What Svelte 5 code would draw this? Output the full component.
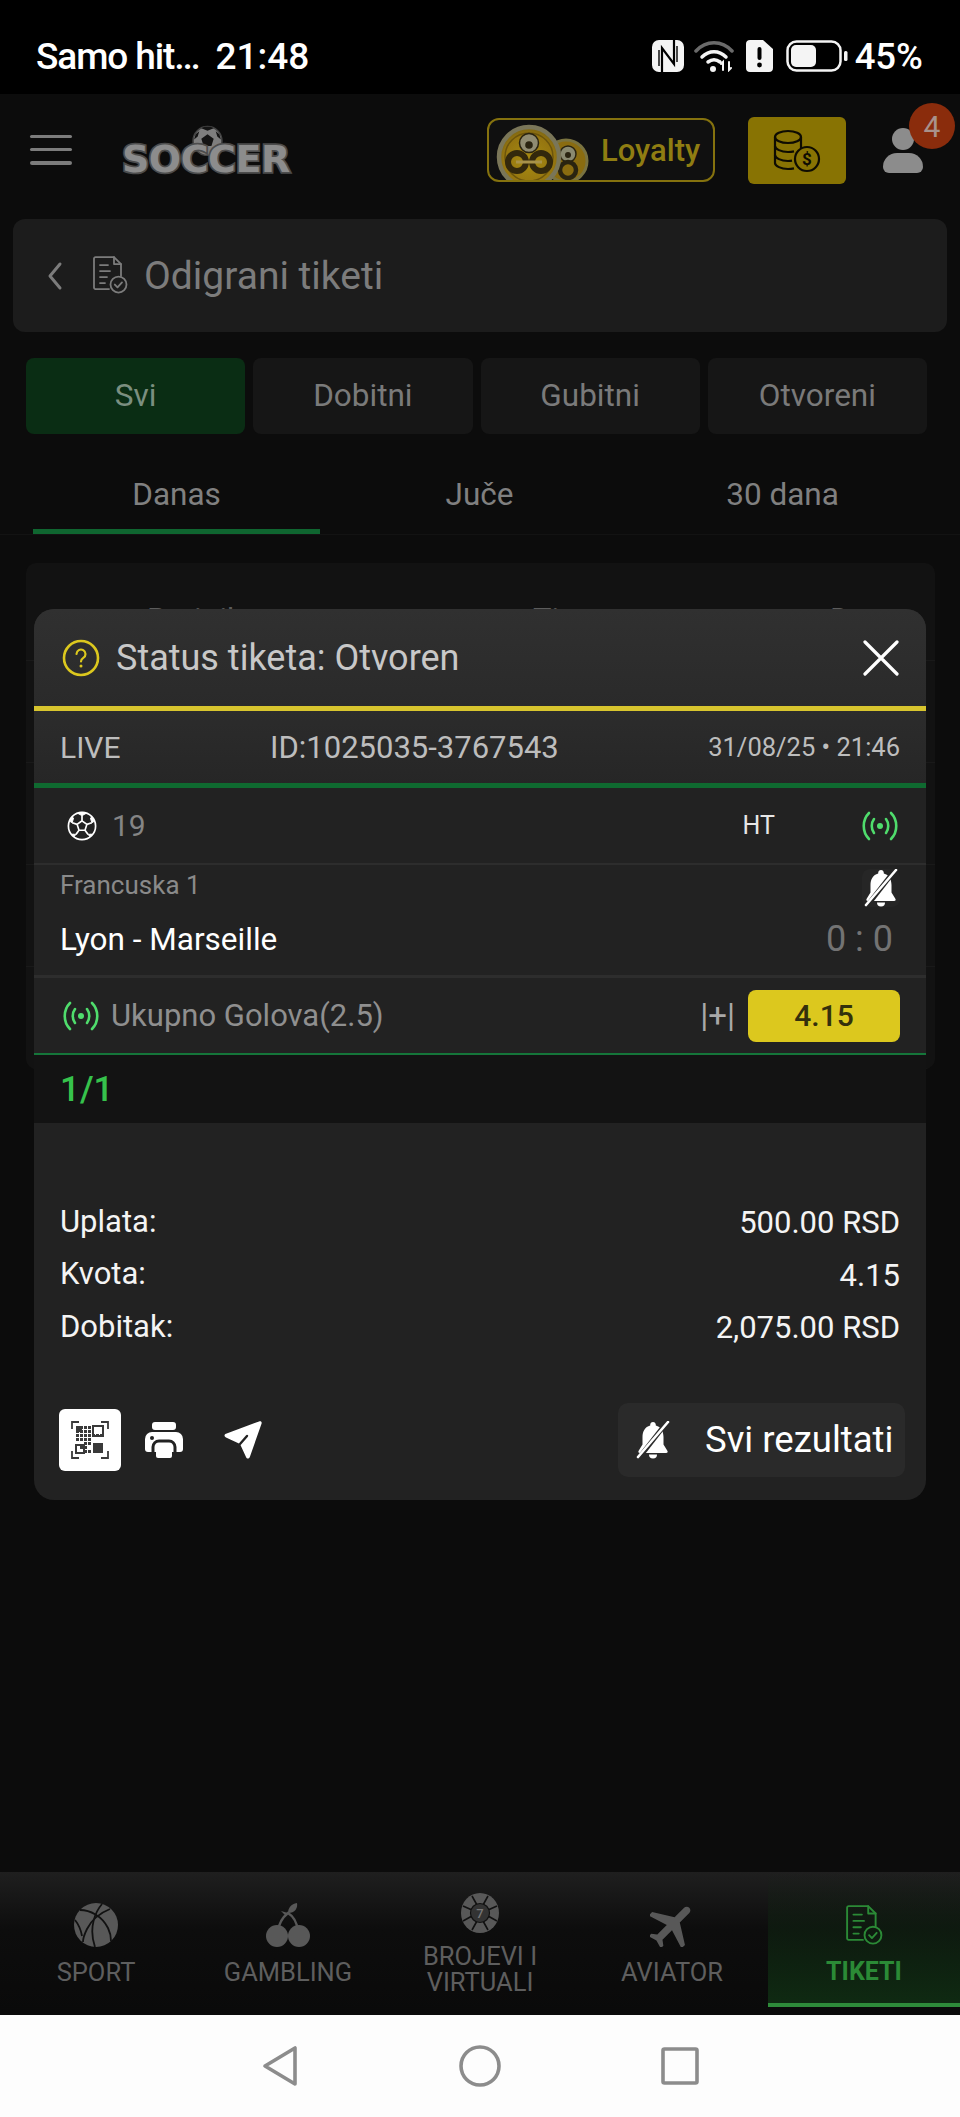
<script>
	const filters = ['Svi', 'Dobitni', 'Gubitni', 'Otvoreni'];
	const periods = ['Danas', 'Juče', '30 dana'];
	const totals = [
		['Uplata:', '500.00 RSD'],
		['Kvota:', '4.15'],
		['Dobitak:', '2,075.00 RSD']
	];
	const qrCells = [
		[3, 7], [7, 3], [7, 7], [11, 3], [11, 7], [15, 11], [11, 11], [7, 11], [3, 15], [7, 15], [11, 15], [11, 19],
		[15, 15], [7, 23], [11, 23], [19, 11], [23, 11], [27, 11], [15, 7], [15, 3], [15, 19], [15, 27], [11, 27], [3, 11]
	];
</script>

{#snippet live()}
	<svg class="live" viewBox="0 0 38 30" fill="none" stroke="#4fdc6c" stroke-width="2.6" stroke-linecap="round">
		<path d="M8 2C1 9 1 21 8 28" />
		<path d="M13 8c-3 4-3 10 0 14" />
		<path d="M30 2c7 7 7 19 0 26" />
		<path d="M25 8c3 4 3 10 0 14" />
		<circle cx="19" cy="15" r="3" fill="#4fdc6c" stroke="none" />
	</svg>
{/snippet}

{#snippet bell(slashBg)}
	<svg class="bell" viewBox="0 0 36 38">
		<path
			fill="#fff"
			d="M18 1c-1.6 0-2.800 1.200-2.800 2.800v.8C10 6 7.500 10.500 7.500 16v7.500L3.500 30c-.5 1 .2 2 1.300 2h26.400c1.100 0 1.800-1 1.300-2l-4-6.500V16c0-5.500-2.500-10-7.700-11.400v-.8C20.800 2.200 19.600 1 18 1z"
		/>
		<path fill="#fff" d="M14 33.500h8a4 4 0 0 1-8 0z" />
		<path d="M32 1 4 37" stroke={slashBg} stroke-width="4.800" />
		<path d="M33 1 3 36" stroke="#fff" stroke-width="2.600" stroke-linecap="round" />
	</svg>
{/snippet}

{#snippet ticketDoc(color, size)}
	<svg width={size} height={size * 1.06} viewBox="0 0 36 38" fill="none" stroke={color} stroke-width="1.800" stroke-linecap="round" stroke-linejoin="round">
		<path d="M17 33H3.500A1.500 1.500 0 0 1 2 31.500v-29A1.500 1.500 0 0 1 3.500 1H22l7 7v12" />
		<path d="M22 1v7h7" />
		<path d="M8 9h8M8 15h10M8 21h7M8 27h5" />
		<circle cx="26.500" cy="28.500" r="8" />
		<path d="m22.800 28.500 2.700 2.800 4.500-5" />
	</svg>
{/snippet}

<div class="screen">
	<div class="statusbar">
		<div class="status-left">
			<span class="carrier">Samo hit…</span>
			<span>21:48</span>
		</div>
		<div class="status-right">
			<svg width="32" height="32" viewBox="0 0 32 32">
				<rect width="32" height="32" rx="7" fill="#f4f4f4" />
				<path d="M10 32V8l12 16V0" stroke="#000" stroke-width="2.200" fill="none" />
				<path d="M7 26V10M25 22V6" stroke="#000" stroke-width="1.400" fill="none" />
			</svg>
			<svg width="42" height="32" viewBox="0 0 42 32" fill="none" stroke-linecap="round">
				<path d="M2 11C12 0 28 0 38 11" stroke="#6a6a6a" stroke-width="3.500" />
				<path d="M8 17c7-7 17-7 24 0" stroke="#f4f4f4" stroke-width="3.500" />
				<path d="M14 22c4-3 8-3 12 0" stroke="#f4f4f4" stroke-width="3.500" />
				<circle cx="19" cy="29" r="3" fill="#f4f4f4" />
				<path d="M29 30v-8l-2 2M35 22v8l2-2" stroke="#f4f4f4" stroke-width="2" />
			</svg>
			<svg width="27" height="32" viewBox="0 0 27 32">
				<path fill="#f4f4f4" d="M4 0h13l10 9v19c0 2.500-1.500 4-4 4H4c-2.500 0-4-1.500-4-4V4c0-2.500 1.500-4 4-4z" />
				<rect x="11.500" y="7" width="4" height="13" rx="2" fill="#000" />
				<circle cx="13.500" cy="25" r="2.400" fill="#000" />
			</svg>
			<svg class="battery" width="62" height="32" viewBox="0 0 62 32">
				<rect x="1.500" y="1.500" width="53" height="29" rx="9" fill="none" stroke="#f4f4f4" stroke-width="2.500" />
				<rect x="5" y="5" width="25" height="22" rx="5" fill="#f4f4f4" />
				<rect x="58" y="11" width="3.500" height="10" rx="1.500" fill="#f4f4f4" />
			</svg>
			<span class="percent">45%</span>
		</div>
	</div>

	<div class="page">
		<header class="topbar">
			<button class="burger" aria-label="Meni">
				<span></span><span></span><span></span>
			</button>
			<div class="logo">
				<svg class="logo-ball" viewBox="0 0 32 30">
					<circle cx="16" cy="15.500" r="14" fill="#7e7e7e" stroke="#444" stroke-width="1.500" />
					<path fill="#141414" d="m16 9 6 4.300-2.200 7h-7.600l-2.200-7zM10 3l6 2.500L22 3l-3-1.400h-6zM3 14l3.500-3L8 6 4.500 9zM29 14l-3.500-3L24 6l3.500 3z" />
				</svg>
				<span class="logo-text">SOCCER</span>
			</div>
			<div class="loyalty">
				<svg class="coins" viewBox="0 0 100 60">
					<defs>
						<radialGradient id="coin" cx="50%" cy="55%" r="60%">
							<stop offset="0%" stop-color="#a88c12" />
							<stop offset="70%" stop-color="#957510" />
							<stop offset="100%" stop-color="#6e5c14" />
						</radialGradient>
					</defs>
					<circle cx="70" cy="41" r="21" fill="#8a6c10" stroke="#7a7340" stroke-width="3" />
					<circle cx="72" cy="34" r="8" fill="#8a8a70" stroke="#2a2410" stroke-width="1.500" />
					<circle cx="72" cy="35" r="3" fill="#2a2410" />
					<circle cx="72" cy="50" r="8" fill="none" stroke="#2a2410" stroke-width="4.500" />
					<circle cx="33" cy="37" r="30" fill="url(#coin)" stroke="#7a7658" stroke-width="4.500" />
					<circle cx="33" cy="37" r="24" fill="none" stroke="#6b540c" stroke-width="1.500" />
					<circle cx="33" cy="23" r="9.500" fill="#908c72" stroke="#2a2410" stroke-width="1.500" />
					<circle cx="33" cy="25" r="3.800" fill="#2a2410" />
					<circle cx="21" cy="42" r="9" fill="none" stroke="#33280c" stroke-width="6" />
					<circle cx="45" cy="42" r="9" fill="none" stroke="#33280c" stroke-width="6" />
					<path d="M20 42h26" stroke="#a8924a" stroke-width="3" />
				</svg>
				<span>Loyalty</span>
			</div>
			<button class="wallet" aria-label="Novčanik">
				<svg width="48" height="44" viewBox="0 0 48 44" fill="none" stroke="#0e0c02" stroke-width="2.200">
					<ellipse cx="15" cy="8" rx="13" ry="6" />
					<path d="M2 8v26c0 3 6 6 13 6 2 0 4-.2 6-.6" />
					<path d="M28 8v12" />
					<path d="M2 17c0 3 6 6 13 6 2 0 4-.2 6-.6M2 26c0 3 6 6 13 6 1.500 0 3-.1 4-.3" />
					<circle cx="34" cy="30" r="12" />
					<text x="34" y="36" text-anchor="middle" class="dollar">$</text>
				</svg>
			</button>
			<div class="user">
				<span class="user-head"></span>
				<span class="user-body"></span>
				<span class="user-badge">4</span>
			</div>
		</header>

		<div class="title-card">
			<svg width="18" height="30" viewBox="0 0 18 30" fill="none" stroke="#7c7c7c" stroke-width="3" stroke-linecap="round" stroke-linejoin="round">
				<path d="M14 3 4 15l10 12" />
			</svg>
			{@render ticketDoc('#7c7c7c', 36)}
			<h1>Odigrani tiketi</h1>
		</div>

		<div class="filters">
			{#each filters as filter, i}
				<div class="filter" class:active={i === 0}>{filter}</div>
			{/each}
		</div>

		<div class="periods">
			{#each periods as period, i}
				<div class="period" class:active={i === 0}>{period}</div>
			{/each}
		</div>

		<div class="table">
			<div class="table-head">
				<span>Broj tiketa</span>
				<span>Tip</span>
				<span>Datum</span>
			</div>
			<div class="table-row"></div>
			<div class="table-row"></div>
			<div class="table-row"></div>
			<div class="table-row"></div>
		</div>

		<div class="modal">
			<div class="modal-head">
				<svg width="38" height="38" viewBox="0 0 38 38" fill="none">
					<circle cx="19" cy="19" r="17" stroke="#dcc81e" stroke-width="2.600" />
					<path d="M14.500 15a4.500 4.500 0 1 1 6.800 3.900c-1.500.9-2.300 1.800-2.300 3.600" stroke="#dcc81e" stroke-width="2.200" stroke-linecap="round" />
					<circle cx="19" cy="27" r="1.500" fill="#dcc81e" />
				</svg>
				<h2>Status tiketa: Otvoren</h2>
				<svg class="close" width="36" height="36" viewBox="0 0 36 36" stroke="#fff" stroke-width="3.200" stroke-linecap="round">
					<path d="M2 2l32 32M34 2 2 34" />
				</svg>
			</div>

			<div class="live-row">
				<span class="live-label">LIVE</span>
				<span class="ticket-id">ID:1025035-3767543</span>
				<span class="ticket-date">31/08/25 • 21:46</span>
			</div>

			<div class="sport-row">
				<svg width="30" height="30" viewBox="0 0 32 32" fill="none" stroke="#fff" stroke-width="1.800">
					<circle cx="16" cy="16" r="14.500" />
					<path d="m16 10.500 5.200 3.800-2 6.200h-6.400l-2-6.200zM16 10.500V5M21.200 14.300l5.300-1.700M19.200 20.500l3.300 4.500M12.800 20.500 9.500 25M10.800 14.300l-5.300-1.700" />
					<path fill="#fff" stroke-width="1" d="M11.500 2.500 16 5l4.500-2.500-2-1h-5zM3 11l2.500 1.600L7 7.500 5.500 6.500zM29 11l-2.500 1.600L25 7.500l1.500-1zM9.500 25l-3.800-.4 1.600 3zM22.500 25l3.800-.4-1.600 3z" />
				</svg>
				<span class="sport-num">19</span>
				<span class="sport-ht">HT</span>
				{@render live()}
			</div>

			<div class="match-row">
				<div class="league-line">
					<span class="league">Francuska 1</span>
					<span class="bell-box">{@render bell('#262626')}</span>
				</div>
				<div class="match-line">
					<span class="teams">Lyon - Marseille</span>
					<span class="score">0 : 0</span>
				</div>
			</div>

			<div class="bet-row">
				{@render live()}
				<span class="bet-name">Ukupno Golova(2.5)</span>
				<span class="bet-pick">|+|</span>
				<span class="odds">4.15</span>
			</div>

			<div class="count-band">1/1</div>

			<div class="totals">
				{#each totals as [label, value]}
					<div class="total-row">
						<span class="total-label">{label}</span>
						<span class="total-value">{value}</span>
					</div>
				{/each}
			</div>

			<div class="actions">
				<div class="qr">
					<svg width="38" height="38" viewBox="0 0 38 38" fill="none">
						<path d="M1 8V1h7M30 1h7v7M1 30v7h7M30 37h7v-7" stroke="#3a3a3a" stroke-width="1.800" />
						<rect x="5" y="5" width="6" height="6" fill="#3a3a3a" />
						<rect x="22" y="5" width="10" height="10" stroke="#3a3a3a" stroke-width="2" />
						<rect x="5" y="24" width="8" height="8" stroke="#3a3a3a" stroke-width="2" />
						<rect x="22" y="22" width="10" height="10" fill="#3a3a3a" />
						{#each qrCells as [x, y]}
							<rect x={x + 2} y={y + 2} width="3" height="3" fill="#3a3a3a" />
						{/each}
					</svg>
				</div>
				<svg class="printer" width="38" height="36" viewBox="0 0 38 36">
					<rect x="7" y="0" width="24" height="8" rx="3" fill="#fff" />
					<path fill="#fff" d="M7 10h24a7 7 0 0 1 7 7v10a3 3 0 0 1-3 3H3a3 3 0 0 1-3-3V17a7 7 0 0 1 7-7z" />
					<circle cx="7" cy="16" r="2" fill="#222" />
					<path d="M8 30v-5a6 6 0 0 1 6-6h10a6 6 0 0 1 6 6v5" fill="none" stroke="#222" stroke-width="3" />
					<rect x="11" y="21" width="16" height="15" rx="2" fill="#fff" />
				</svg>
				<svg class="send" width="38" height="38" viewBox="0 0 38 38">
					<path fill="#fff" d="M35 .5c2-.6 3 .4 2.600 2L26 35.500c-.8 2.500-3 2.700-4 .5l-6-13L2 16.500c-2-1-2-3 0-3.800z" />
					<path d="m16 23 7-8" stroke="#222" stroke-width="2.400" stroke-linecap="round" />
				</svg>
				<button class="results-btn">
					{@render bell('#2a2a2a')}
					<span>Svi rezultati</span>
				</button>
			</div>
		</div>
	</div>

	<nav class="bottomnav">
		<div class="nav-item">
			<svg width="44" height="44" viewBox="0 0 44 44" fill="none">
				<circle cx="22" cy="22" r="22" fill="#585858" />
				<g stroke="#111" stroke-width="1.800">
					<path d="M6 7c10 0 22 6 28 18 2 4 3 9 3 13" />
					<path d="M28 1C22 8 14 24 21 44" />
					<path d="M36 6C26 10 18 16 13 26 10 32 9 36 9 39" />
					<path d="M1 17c4 5 6 10 7 16" />
				</g>
			</svg>
			<span>SPORT</span>
		</div>
		<div class="nav-item">
			<svg width="44" height="44" viewBox="0 0 44 44" fill="none">
				<path d="M12 28c1-8 5-14 10-18 5 3 9 10 10 18" stroke="#585858" stroke-width="2.400" />
				<path fill="#585858" d="M22 10c0-5 3-9 9-10 1 5-2 10-9 10zM15 8l7 2-2 3z" />
				<ellipse cx="11" cy="33" rx="11" ry="11" fill="#585858" />
				<ellipse cx="33" cy="33" rx="11" ry="11" fill="#585858" />
			</svg>
			<span>GAMBLING</span>
		</div>
		<div class="nav-item nav-chip">
			<svg width="38" height="40" viewBox="0 0 38 40">
				<ellipse cx="19" cy="20" rx="19" ry="20" fill="#585858" />
				<g stroke="#111" stroke-width="1.600">
					<path d="M11 3l5 9M27 3l-5 9M2 13l9 4M36 13l-9 4M2 28l9-5M36 28l-9-5M11 37l5-9M27 37l-5-9" />
				</g>
				<circle cx="19" cy="20" r="9.500" fill="#333" stroke="#111" stroke-width="1.200" />
				<text x="19" y="25" text-anchor="middle" class="chip-num">7</text>
			</svg>
			<span>BROJEVI I<br />VIRTUALI</span>
		</div>
		<div class="nav-item">
			<svg width="44" height="44" viewBox="3 3 18 18">
				<g transform="rotate(45 12 12)">
					<path fill="#585858" d="M21.500 16v-2l-8-5V3.500c0-.83-.67-1.500-1.500-1.500s-1.500.67-1.500 1.500V9l-8 5v2l8-2.500V19l-2 1.500V22l3.500-1 3.500 1v-1.500l-2-1.500v-5.500z" />
				</g>
			</svg>
			<span>AVIATOR</span>
		</div>
		<div class="nav-item active">
			{@render ticketDoc('#2b8a36', 38)}
			<span>TIKETI</span>
		</div>
	</nav>

	<div class="sysnav">
		<svg width="36" height="42" viewBox="0 0 36 42" fill="none" stroke="#8c8c8c" stroke-width="3.600" stroke-linejoin="round">
			<path d="M33 3v36L3 21z" />
		</svg>
		<svg width="42" height="42" viewBox="0 0 42 42" fill="none" stroke="#8c8c8c" stroke-width="3.600">
			<circle cx="21" cy="21" r="19" />
		</svg>
		<svg width="38" height="38" viewBox="0 0 38 38" fill="none" stroke="#8c8c8c" stroke-width="3.600" stroke-linejoin="round">
			<rect x="2" y="2" width="34" height="34" rx="1.500" />
		</svg>
	</div>
</div>

<style>
	:global(body) {
		background: #000;
	}

	.screen {
		width: 960px;
		height: 2117px;
		display: flex;
		flex-direction: column;
		font-family: Roboto, 'Liberation Sans', sans-serif;
		overflow: hidden;
	}

	.statusbar {
		height: 94px;
		flex-shrink: 0;
		background: #000;
		color: #fff;
		display: flex;
		align-items: center;
		justify-content: space-between;
		padding: 18px 37px 0 36px;
		box-sizing: border-box;
		font-size: 37px;
		font-weight: 500;
	}

	.status-left {
		display: flex;
		gap: 16px;
	}

	.carrier {
		letter-spacing: -1.1px;
	}

	.status-right {
		display: flex;
		align-items: center;
		gap: 10px;
	}

	.battery {
		margin-left: 3px;
		margin-right: -3px;
	}

	.percent {
		font-size: 36.500px;
	}

	.page {
		position: relative;
		flex: 1;
		background: #0c0c0c;
	}

	.topbar {
		height: 111px;
		position: relative;
		display: flex;
		align-items: center;
		padding-left: 30px;
	}

	.burger {
		width: 42px;
		height: 30px;
		padding: 0;
		border: none;
		background: none;
		display: flex;
		flex-direction: column;
		justify-content: space-between;
	}

	.burger span {
		height: 3.500px;
		background: #7c7c7c;
		border-radius: 2px;
	}

	.logo {
		position: relative;
		width: 168px;
		height: 48px;
		margin-left: 50px;
		margin-top: 1px;
	}

	.logo-ball {
		position: absolute;
		left: 69px;
		top: -1px;
		width: 33px;
		height: 31px;
	}

	.logo-text {
		position: absolute;
		left: 0;
		bottom: -4px;
		font-family: 'DejaVu Sans', sans-serif;
		font-size: 38px;
		font-weight: 700;
		letter-spacing: -0.5px;
		line-height: 1;
		color: #8c8c8c;
		-webkit-text-stroke: 3.500px #4c4c4c;
		paint-order: stroke fill;
	}

	.loyalty {
		margin-left: 197px;
		width: 228px;
		height: 64px;
		box-sizing: border-box;
		border: 2.500px solid #85720e;
		border-radius: 12px;
		background: #101010;
		display: flex;
		align-items: center;
		overflow: hidden;
		color: #8f7d12;
		font-size: 31px;
		font-weight: 500;
	}

	.coins {
		width: 100px;
		height: 60px;
		margin-left: 7px;
		flex-shrink: 0;
	}

	.loyalty span {
		margin-left: 5px;
		padding-top: 2px;
	}

	.wallet {
		margin-left: 33px;
		margin-top: 2px;
		width: 98px;
		height: 67px;
		padding: 0;
		border: none;
		border-radius: 6px;
		background: #887303;
		display: flex;
		align-items: center;
		justify-content: center;
	}

	.dollar {
		font-family: Roboto, sans-serif;
		font-size: 17px;
		font-weight: 700;
		fill: #0e0c02;
		stroke: none;
	}

	.user {
		position: absolute;
		left: 883px;
		top: 9px;
		width: 72px;
		height: 70px;
	}

	.user-head {
		position: absolute;
		left: 9px;
		top: 25px;
		width: 22px;
		height: 22px;
		border-radius: 50%;
		background: #8c8c8c;
	}

	.user-body {
		position: absolute;
		left: 0;
		top: 50px;
		width: 40px;
		height: 20px;
		border-radius: 14px 14px 6px 6px;
		background: #8c8c8c;
	}

	.user-badge {
		position: absolute;
		left: 26px;
		top: 0;
		width: 46px;
		height: 46px;
		border-radius: 50%;
		background: #8a2c0c;
		color: #a8928c;
		font-size: 30px;
		display: flex;
		align-items: center;
		justify-content: center;
	}

	.title-card {
		margin: 14px 13px 0;
		height: 113px;
		border-radius: 12px;
		background: #1c1c1c;
		display: flex;
		align-items: center;
		padding-left: 33px;
		color: #7c7c7c;
	}

	.title-card svg:nth-of-type(2) {
		margin-left: 28px;
	}

	h1 {
		margin: 0 0 0 16px;
		font-size: 39px;
		font-weight: 400;
	}

	.filters {
		margin-top: 26px;
		padding: 0 33px 0 26px;
		display: grid;
		grid-template-columns: repeat(4, 1fr);
		gap: 8px;
	}

	.filter {
		height: 76px;
		padding-bottom: 2px;
		box-sizing: border-box;
		border-radius: 8px;
		background: #161616;
		color: #7a7a7a;
		font-size: 31.500px;
		display: flex;
		align-items: center;
		justify-content: center;
	}

	.filter.active {
		background: #0a2d14;
		color: #7b8f80;
	}

	.periods {
		margin-top: 20px;
		padding: 0 25px;
		display: grid;
		grid-template-columns: repeat(3, 303px);
		border-bottom: 1px solid #131313;
	}

	.period {
		position: relative;
		height: 80px;
		color: #808080;
		font-size: 31.500px;
		display: flex;
		align-items: center;
		justify-content: center;
	}

	.period.active::after {
		content: '';
		position: absolute;
		left: 8px;
		right: 8px;
		bottom: 0;
		height: 5px;
		background: #0f6630;
	}

	.table {
		margin: 28px 25px 0 26px;
		border-radius: 10px;
		background: #121212;
		overflow: hidden;
	}

	.table-head {
		height: 98px;
		position: relative;
		display: grid;
		grid-template-columns: 386px 297px auto;
		padding: 38px 0 0 121px;
		box-sizing: border-box;
		font-size: 31px;
		color: #5c5c5c;
		white-space: nowrap;
		border-bottom: 1px solid #191919;
	}

	.table-row {
		height: 102px;
		box-sizing: border-box;
		border-bottom: 1px solid #191919;
	}

	.modal {
		position: absolute;
		left: 34px;
		top: 515px;
		width: 892px;
		height: 891px;
		border-radius: 20px;
		overflow: hidden;
		background: #222;
		display: flex;
		flex-direction: column;
	}

	.modal-head {
		height: 97px;
		flex-shrink: 0;
		box-sizing: border-box;
		background: linear-gradient(#303030, #2a2a2a);
		display: flex;
		align-items: center;
		padding: 0 27px 0 28px;
		color: #c8c8c8;
	}

	h2 {
		margin: 0 0 0 16px;
		flex: 1;
		font-size: 36px;
		font-weight: 400;
	}

	.live-row {
		height: 82px;
		flex-shrink: 0;
		box-sizing: border-box;
		border-top: 5px solid #d8c52e;
		border-bottom: 5px solid #0f6a30;
		background: linear-gradient(#2c2c2c, #262626);
		padding: 0 26px;
		display: grid;
		grid-template-columns: 210px 1fr auto;
		align-items: center;
		color: #bdbdbd;
		font-size: 30px;
	}

	.ticket-id {
		font-size: 31px;
	}

	.ticket-date {
		font-size: 25.500px;
	}

	.sport-row {
		height: 75px;
		flex-shrink: 0;
		display: flex;
		align-items: center;
		padding: 0 27px 0 33px;
		box-sizing: border-box;
	}

	.sport-num {
		margin-left: 15px;
		flex: 1;
		font-size: 30px;
		color: #858585;
	}

	.sport-ht {
		margin-right: 86px;
		font-size: 25px;
		color: #e6e6e6;
	}

	.live {
		width: 38px;
		height: 30px;
		flex-shrink: 0;
	}

	.match-row {
		height: 115px;
		flex-shrink: 0;
		box-sizing: border-box;
		border-top: 2px solid #2d2d2d;
		border-bottom: 3px solid #2d2d2d;
		padding: 4px 26px 0;
	}

	.league-line,
	.match-line {
		display: flex;
		align-items: center;
		justify-content: space-between;
	}

	.league-line {
		height: 38px;
	}

	.league {
		padding-bottom: 6px;
		font-size: 26px;
		color: #8a8a8a;
	}

	.bell-box {
		width: 38px;
		height: 38px;
		border-radius: 8px;
		background: #262626;
		display: flex;
		align-items: center;
		justify-content: center;
	}

	.bell {
		width: 36px;
		height: 38px;
		flex-shrink: 0;
	}

	.match-line {
		margin-top: 11px;
	}

	.teams {
		font-size: 31.500px;
		color: #fff;
	}

	.score {
		font-size: 36px;
		color: #737373;
		margin-right: 7px;
	}

	.bet-row {
		height: 77px;
		flex-shrink: 0;
		box-sizing: border-box;
		border-bottom: 2px solid #15763a;
		display: flex;
		align-items: center;
		padding: 0 26px 0 28px;
	}

	.bet-name {
		margin-left: 11px;
		flex: 1;
		font-size: 31px;
		color: #8f8f8f;
	}

	.bet-pick {
		margin-right: 13px;
		font-size: 33px;
		color: #a8a8a8;
	}

	.odds {
		width: 152px;
		height: 52px;
		border-radius: 8px;
		background: #dcc81e;
		color: #33300c;
		font-size: 30px;
		font-weight: 500;
		display: flex;
		align-items: center;
		justify-content: center;
	}

	.count-band {
		height: 68px;
		flex-shrink: 0;
		box-sizing: border-box;
		background: #131313;
		padding-left: 26px;
		display: flex;
		align-items: center;
		color: #36c24c;
		font-size: 35px;
		font-weight: 500;
	}

	.totals {
		margin-top: 72px;
		padding: 0 26px;
	}

	.total-row {
		height: 52.500px;
		display: flex;
		align-items: center;
		justify-content: space-between;
		color: #f4f4f4;
		font-size: 31px;
	}

	.total-label {
		font-size: 31px;
	}

	.total-value {
		padding-top: 3px;
	}

	.actions {
		margin-top: 50px;
		padding: 0 21px 0 25px;
		display: flex;
		align-items: center;
	}

	.qr {
		width: 62px;
		height: 62px;
		border-radius: 6px;
		background: #fff;
		display: flex;
		align-items: center;
		justify-content: center;
	}

	.printer {
		margin-left: 24px;
	}

	.send {
		margin-left: 41px;
		margin-right: auto;
	}

	.results-btn {
		width: 287px;
		height: 74px;
		padding: 0 0 0 17px;
		border: none;
		border-radius: 10px;
		background: #2a2a2a;
		color: #fff;
		font-family: inherit;
		font-size: 36.500px;
		display: flex;
		align-items: center;
		gap: 34px;
		white-space: nowrap;
	}

	.bottomnav {
		height: 143px;
		flex-shrink: 0;
		display: grid;
		grid-template-columns: repeat(5, 192px);
		background: linear-gradient(#1f1f1f, #0d0d0d 40%, #0a0a0a);
	}

	.nav-item {
		display: flex;
		flex-direction: column;
		align-items: center;
		box-sizing: border-box;
		padding-top: 31px;
		color: #5e5e5e;
		font-size: 25.500px;
		line-height: 29px;
		text-align: center;
	}

	.nav-item span {
		margin-top: 11px;
	}

	.nav-chip {
		padding-top: 21px;
	}

	.nav-chip span {
		margin-top: 10px;
		line-height: 26px;
	}

	.chip-num {
		font-family: Roboto, sans-serif;
		font-size: 13px;
		font-weight: 500;
		fill: #777;
	}

	.nav-item.active {
		padding-top: 33px;
		color: #2b8a36;
		font-size: 25px;
		font-weight: 700;
		border-bottom: 4px solid #2e8b3a;
		margin-bottom: 8px;
		background: linear-gradient(rgba(15, 42, 18, 0), #0f2a12);
	}

	.nav-item.active span {
		margin-top: 12px;
	}

	.sysnav {
		height: 102px;
		flex-shrink: 0;
		background: #fdfdfd;
		display: flex;
		align-items: center;
		justify-content: center;
	}

	.sysnav svg:nth-child(1) {
		margin-left: 1px;
		margin-right: 36.500px;
	}

	.sysnav svg:nth-child(2) {
		margin-left: 124px;
	}

	.sysnav svg:nth-child(3) {
		margin-left: 160.500px;
	}
</style>
